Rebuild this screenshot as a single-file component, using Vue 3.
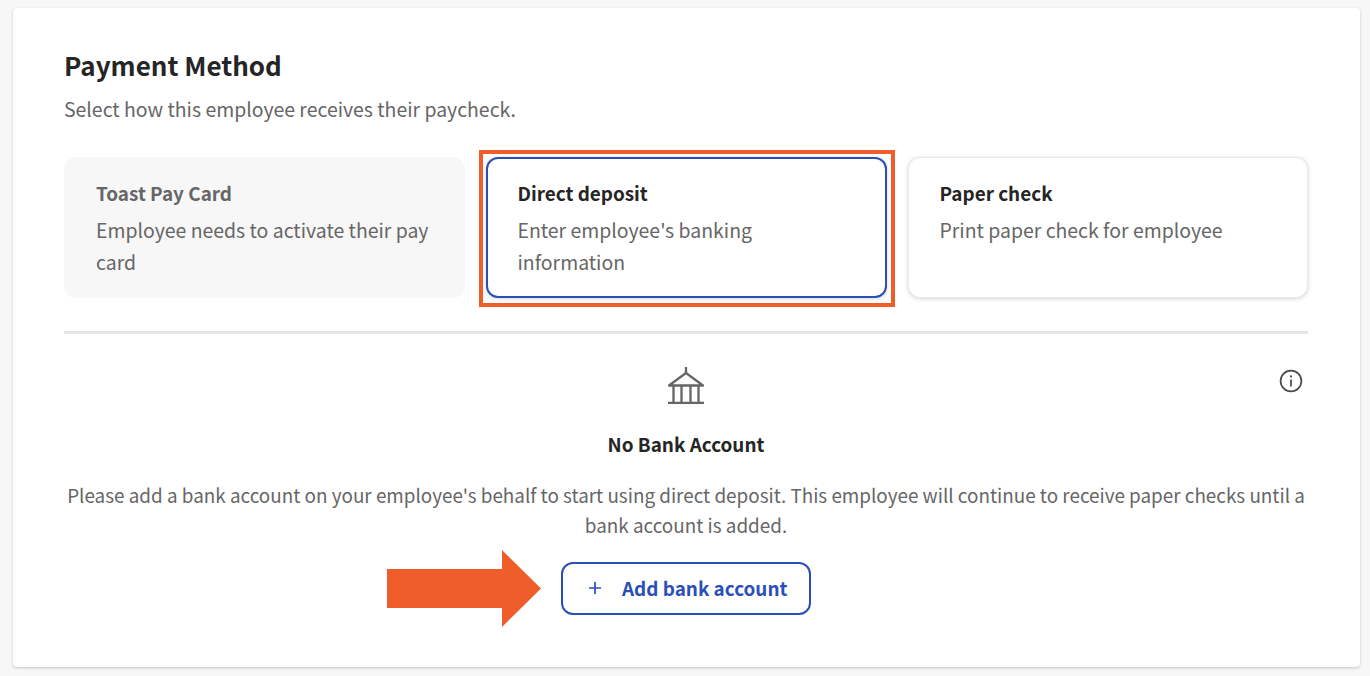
<template>
  <div class="page">
    <section class="panel">
      <h1 class="title">Payment Method</h1>
      <p class="subtitle">Select how this employee receives their paycheck.</p>

      <div class="options">
        <div
          v-for="opt in options"
          :key="opt.name"
          :class="['option', opt.state]"
        >
          <div class="option-name">{{ opt.name }}</div>
          <div class="option-desc">{{ opt.desc }}</div>
          <div v-if="opt.state === 'selected'" class="highlight"></div>
        </div>
      </div>

      <div class="empty">
        <svg class="info" width="24" height="24" viewBox="0 0 24 24" fill="none" stroke="#4a4a4a" stroke-width="1.7">
          <circle cx="12" cy="12" r="10.4" />
          <path d="M12 10.6v6.8" />
          <circle cx="12" cy="7.4" r="1.1" fill="#4a4a4a" stroke="none" />
        </svg>
        <svg class="bank" width="36" height="37" viewBox="0 0 36 37" fill="none" stroke="#666" stroke-width="2.3">
          <path d="M18 0v6" />
          <path d="M1 18.500 18 6l17 12.500z" stroke-linejoin="round" />
          <path d="M5.500 18.500v17M13.500 18.500v17M22.500 18.500v17M30.500 18.500v17" />
          <path d="M0 35.800h36" />
        </svg>
        <div class="empty-title">No Bank Account</div>
        <p class="empty-text">
          Please add a bank account on your employee's behalf to start using direct deposit. This employee will continue to receive paper checks until a bank account is added.
        </p>
        <div class="add-wrap">
          <button class="add-btn" type="button">
            <svg width="12" height="12" viewBox="0 0 12 12" fill="none" stroke="#2b4fb9" stroke-width="1.7">
              <path d="M6 0v12M0 6h12" />
            </svg>
            <span>Add bank account</span>
          </button>
          <svg class="arrow" width="154" height="77" viewBox="0 0 154 77">
            <path d="M0 19h115V0l39 38.500L115 77V58H0z" fill="#ef5d2a" />
          </svg>
        </div>
      </div>
    </section>
  </div>
</template>

<script setup>
const options = [
  {
    name: 'Toast Pay Card',
    desc: 'Employee needs to activate their pay card',
    state: 'disabled'
  },
  {
    name: 'Direct deposit',
    desc: "Enter employee's banking information",
    state: 'selected'
  },
  {
    name: 'Paper check',
    desc: 'Print paper check for employee',
    state: 'normal'
  }
]
</script>

<style>
html,
body {
  margin: 0;
  background: #f7f7f7;
}
</style>

<style scoped>
.page {
  height: 676px;
  box-sizing: border-box;
  padding: 8px 10px 9px 13px;
  overflow: hidden;
  font-family: "Noto Sans CJK SC", "Noto Sans", sans-serif;
}
.panel {
  height: 100%;
  box-sizing: border-box;
  padding: 39px 52px 0 51px;
  background: #fff;
  border-radius: 4px;
  box-shadow: 0 1px 3px rgba(0, 0, 0, 0.2);
}
.title {
  margin: 0;
  font-size: 26px;
  line-height: 36px;
  font-weight: 700;
  color: #252525;
}
.subtitle {
  margin: 14px 0 0;
  font-size: 19.450px;
  line-height: 24px;
  color: #666;
}
.options {
  display: grid;
  grid-template-columns: 401px 401px 400px;
  gap: 21px;
  margin-top: 36px;
  padding-bottom: 33px;
  border-bottom: 3px solid #e6e6e6;
}
.option {
  position: relative;
  height: 141px;
  box-sizing: border-box;
  padding: 20px 30.500px 0;
  border: 1px solid #e8e8e8;
  border-radius: 12px;
  background: #fff;
  box-shadow: 0 1px 4px rgba(0, 0, 0, 0.16);
}
.option.disabled {
  background: #f7f7f7;
  border-color: #f7f7f7;
  box-shadow: none;
  padding-left: 31px;
}
.option.disabled .option-name {
  color: #666;
}
.option.selected {
  border: 2px solid #2b4fb9;
  padding: 19px 29.500px 0;
}
.option-name {
  font-size: 18.900px;
  line-height: 30px;
  font-weight: 600;
  color: #252525;
}
.option-desc {
  margin-top: 6px;
  font-size: 19.450px;
  line-height: 32px;
  color: #666;
}
.highlight {
  position: absolute;
  top: -9px;
  right: -10px;
  bottom: -11px;
  left: -9px;
  border: 4px solid #ef5d2a;
}
.empty {
  position: relative;
  display: flex;
  flex-direction: column;
  align-items: center;
  padding-top: 33px;
  text-align: center;
}
.info {
  position: absolute;
  top: 35px;
  right: 5px;
}
.bank {
  display: block;
}
.empty-title {
  margin-top: 25px;
  font-size: 18.900px;
  line-height: 30px;
  font-weight: 600;
  color: #252525;
}
.empty-text {
  margin: 21px 0 0;
  font-size: 18.880px;
  line-height: 30px;
  color: #666;
}
.add-wrap {
  position: relative;
  margin-top: 22px;
}
.add-btn {
  display: flex;
  align-items: center;
  gap: 21px;
  width: 250px;
  height: 53px;
  box-sizing: border-box;
  padding: 0 20px 2px 26px;
  border: 2px solid #2b4fb9;
  border-radius: 12px;
  background: #fff;
  font-family: inherit;
  font-size: 18.900px;
  font-weight: 600;
  white-space: nowrap;
  color: #2b4fb9;
}
.arrow {
  position: absolute;
  left: -174px;
  top: -12px;
}
</style>
